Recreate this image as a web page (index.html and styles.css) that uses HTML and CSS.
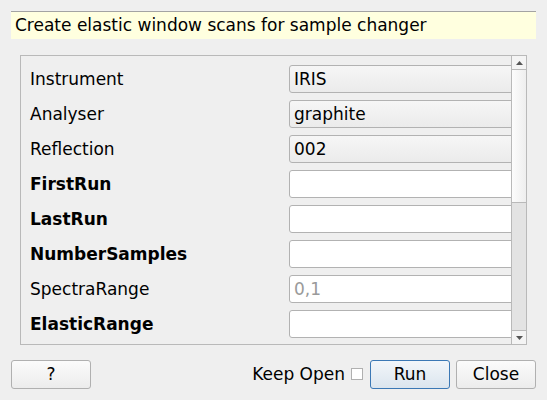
FILE: index.html
```html
<!DOCTYPE html>
<html>
<head>
<meta charset="utf-8">
<link rel="stylesheet" href="styles.css">
</head>
<body>
<div class="dialog">
  <div class="desc">Create elastic window scans for sample changer</div>
  <div class="scroll">
    <div class="content">
      <div class="row"><span class="label">Instrument</span><span class="combo">IRIS</span></div>
      <div class="row"><span class="label">Analyser</span><span class="combo">graphite</span></div>
      <div class="row"><span class="label">Reflection</span><span class="combo">002</span></div>
      <div class="row"><span class="label req">FirstRun</span><span class="field"></span></div>
      <div class="row"><span class="label req">LastRun</span><span class="field"></span></div>
      <div class="row"><span class="label req">NumberSamples</span><span class="field"></span></div>
      <div class="row"><span class="label">SpectraRange</span><span class="field placeholder">0,1</span></div>
      <div class="row"><span class="label req">ElasticRange</span><span class="field"></span></div>
    </div>
    <div class="vbar">
      <div class="arrow up"><svg width="7" height="4" viewBox="0 0 7 4"><path d="M0 4 L3.5 0 L7 4 Z" fill="#555"/></svg></div>
      <div class="handle"></div>
      <div class="track"></div>
      <div class="arrow down"><svg width="7" height="4" viewBox="0 0 7 4"><path d="M0 0 L7 0 L3.5 4 Z" fill="#555"/></svg></div>
    </div>
  </div>
  <div class="buttons">
    <button class="btn">?</button>
    <div class="spacer"></div>
    <label class="keep">Keep Open <span class="check"></span></label>
    <button class="btn default">Run</button>
    <button class="btn">Close</button>
  </div>
</div>
</body>
</html>
```
FILE: styles.css
```css
html, body {
  margin: 0;
  padding: 0;
  background: #efefef;
  font-family: "DejaVu Sans", sans-serif;
  font-size: 17px;
  color: #000;
}
.dialog {
  width: 547px;
  height: 400px;
  padding: 11px 11px 0 11px;
  box-sizing: border-box;
}
.desc {
  height: 28px;
  box-sizing: border-box;
  background: #ffffdf;
  border-top: 1px solid #a3a3a3;
  padding-left: 4px;
  line-height: 26px;
  white-space: nowrap;
}
.scroll {
  margin: 16px 0 0 9px;
  width: 507px;
  height: 290px;
  box-sizing: border-box;
  border: 1px solid #b9b9b9;
  display: flex;
  overflow: hidden;
}
.content {
  flex: 1;
  overflow: hidden;
  padding: 9px 0 0 9px;
  display: flex;
  flex-direction: column;
  gap: 7px;
}
.row {
  display: flex;
  align-items: center;
  height: 28px;
}
.label {
  width: 259px;
  flex: none;
  white-space: nowrap;
}
.label.req {
  font-weight: bold;
}
.combo, .field {
  flex: none;
  width: 240px;
  height: 28px;
  box-sizing: border-box;
  border: 1px solid #b2b2b2;
  border-radius: 3px;
  padding-left: 4px;
  line-height: 26px;
}
.combo {
  background: linear-gradient(#f6f6f6, #ebebeb);
}
.field {
  background: #fff;
}
.placeholder {
  color: #9a9a9a;
}
.vbar {
  flex: none;
  width: 14px;
  display: flex;
  flex-direction: column;
  border-left: 1px solid #b9b9b9;
  background: #e3e3e3;
}
.arrow {
  height: 13px;
  display: flex;
  align-items: center;
  justify-content: center;
  background: #f4f4f4;
}
.arrow.up {
  border-bottom: 1px solid #b9b9b9;
}
.arrow.down {
  border-top: 1px solid #b9b9b9;
}
.handle {
  height: 132px;
  background: linear-gradient(to right, #fcfcfc, #eeeeee);
  border-bottom: 1px solid #b9b9b9;
}
.track {
  flex: 1;
}
.buttons {
  display: flex;
  align-items: center;
  margin-top: 15px;
  height: 29px;
}
.spacer {
  flex: 1;
}
.btn {
  width: 80px;
  height: 29px;
  box-sizing: border-box;
  border: 1px solid #b0b0b0;
  border-radius: 3px;
  background: linear-gradient(#fbfbfb, #ececec);
  font-family: "DejaVu Sans", sans-serif;
  font-size: 17px;
  color: #000;
  padding: 0 0 2px 0;
  margin: 0;
}
.btn.default {
  border-color: #3b78b5;
  background: linear-gradient(#f2f6fa, #dbe5ee);
  margin-right: 6px;
}
.keep {
  display: flex;
  align-items: center;
  gap: 6px;
  margin-right: 7px;
  padding-bottom: 1px;
  white-space: nowrap;
}
.check {
  width: 10px;
  height: 10px;
  border: 1px solid #b0b0b0;
  background: #fff;
  display: inline-block;
}
```
